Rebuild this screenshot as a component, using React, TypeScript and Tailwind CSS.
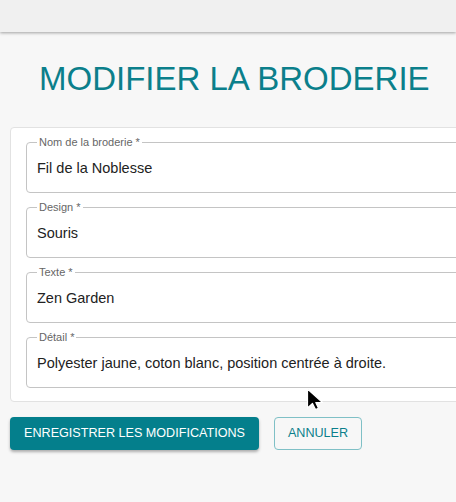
import React from "react";

const fields = [
  { label: "Nom de la broderie", value: "Fil de la Noblesse" },
  { label: "Design", value: "Souris" },
  { label: "Texte", value: "Zen Garden" },
  { label: "Détail", value: "Polyester jaune, coton blanc, position centrée à droite." },
];

const Field = ({ label, value }: { label: string; value: string }) => {
  return (
    <fieldset className="border border-[#c4c4c4] rounded-[4px] px-[10px] m-0 min-w-0">
      <legend className="text-[11px] leading-[12px] text-[#666] px-[2px]">
        {label} *
      </legend>
      <div className="text-[14.5px] leading-[20px] text-[#222] pt-[10px] pb-[14px] whitespace-nowrap">
        {value}
      </div>
    </fieldset>
  );
};

const App = () => {
  return (
    <div
      className="relative w-[456px] h-[502px] overflow-hidden bg-[#f7f7f7]"
      style={{ fontFamily: '"Liberation Sans", Arial, sans-serif' }}
    >
      <header className="h-[32px] bg-[#f0f0f0] shadow-[0_1px_3px_rgba(0,0,0,0.35)]" />
      <main className="flex flex-col">
        <h1 className="pl-[39px] pt-[27px] text-[33px] leading-[40px] text-[#0b7f8b] font-normal">
          MODIFIER LA BRODERIE
        </h1>
        <section className="ml-[10px] mt-[28px] w-[480px] bg-white border border-[#e2e2e2] rounded-[4px] pl-[15px] pt-[8px] pb-[13px] flex flex-col gap-[8px]">
          {fields.map((f) => (
            <Field key={f.label} label={f.label} value={f.value} />
          ))}
        </section>
        <div className="flex gap-[15px] ml-[10px] mt-[15px]">
          <button className="h-[33px] w-[249px] rounded-[4px] bg-[#047f8c] text-white text-[12.6px] uppercase shadow-[0_2px_3px_rgba(0,0,0,0.3)]">
            Enregistrer les modifications
          </button>
          <button className="h-[33px] w-[88px] rounded-[4px] border border-[#7fc0c6] text-[#0b7f8b] text-[12.6px] uppercase">
            Annuler
          </button>
        </div>
      </main>
      <svg
        className="absolute left-[306px] top-[388px]"
        width="20"
        height="24"
        viewBox="0 0 20 24"
      >
        <path d="M1.5 1 L1.5 20 L6.5 15.5 L9.5 21.5 L12.5 20.2 L9.8 14.5 L16.5 14.5 Z" fill="#000" stroke="#fff" strokeWidth="1.2" strokeLinejoin="round" />
      </svg>
    </div>
  );
};

export default App;
